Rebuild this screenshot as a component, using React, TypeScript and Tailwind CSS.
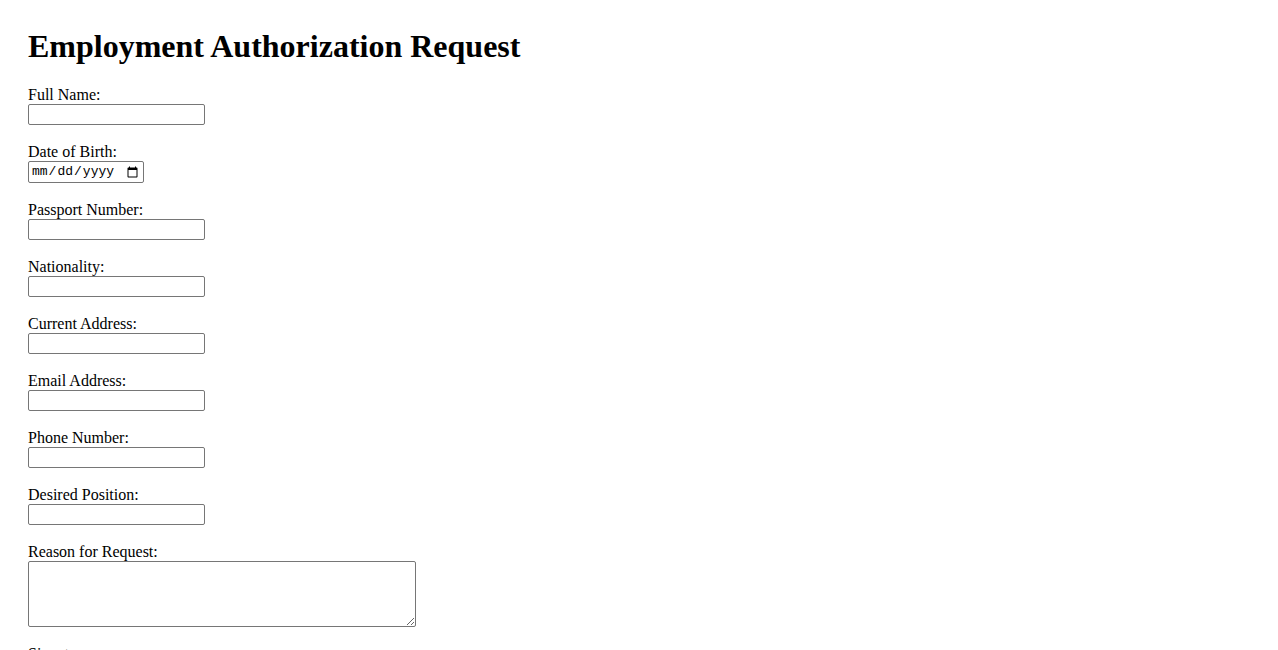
import React from 'react';

const fields = [
  { id: 'fullName', label: 'Full Name:', type: 'text' },
  { id: 'dob', label: 'Date of Birth:', type: 'date' },
  { id: 'passport', label: 'Passport Number:', type: 'text' },
  { id: 'nationality', label: 'Nationality:', type: 'text' },
  { id: 'address', label: 'Current Address:', type: 'text' },
  { id: 'email', label: 'Email Address:', type: 'email' },
  { id: 'phone', label: 'Phone Number:', type: 'tel' },
  { id: 'position', label: 'Desired Position:', type: 'text' },
];

const inputClass =
  'block h-[21px] w-[177px] rounded-[2px] border border-[#767676] bg-white px-[2px] text-[13px] outline-none';

export default function App() {
  return (
    <div className="min-h-screen bg-white px-[28px] pt-[28px] pb-10 font-['Liberation_Serif',serif] text-black">
      <h1 className="mb-[21px] text-[32px] font-bold leading-[37px]">Employment Authorization Request</h1>

      <form onSubmit={e => e.preventDefault()}>
        {fields.map(f => (
          <div key={f.id} className="mb-[18px]">
            <label htmlFor={f.id} className="block text-[16px] leading-[18px]">
              {f.label}
            </label>
            {f.type === 'date' ? (
              <input
                id={f.id}
                type="date"
                className="block h-[22px] w-[116px] rounded-[2px] border border-[#767676] bg-white px-[2px] font-['Liberation_Mono',monospace] text-[13px] outline-none"
              />
            ) : (
              <input id={f.id} type={f.type} className={inputClass} />
            )}
          </div>
        ))}

        <div className="mb-[18px]">
          <label htmlFor="reason" className="block text-[16px] leading-[18px]">
            Reason for Request:
          </label>
          <textarea
            id="reason"
            className="block h-[66px] w-[388px] rounded-[2px] border border-[#767676] bg-white p-[2px] text-[13px] outline-none"
          />
        </div>

        <div className="mb-[18px]">
          <label htmlFor="signature" className="block text-[16px] leading-[18px]">
            Signature:
          </label>
          <input id="signature" type="text" className={inputClass} />
        </div>

        <button
          type="submit"
          className="rounded-[2px] border border-[#767676] bg-[#efefef] px-[6px] py-[1px] text-[13px] font-['Liberation_Sans',sans-serif]"
        >
          Submit
        </button>
      </form>
    </div>
  );
}
